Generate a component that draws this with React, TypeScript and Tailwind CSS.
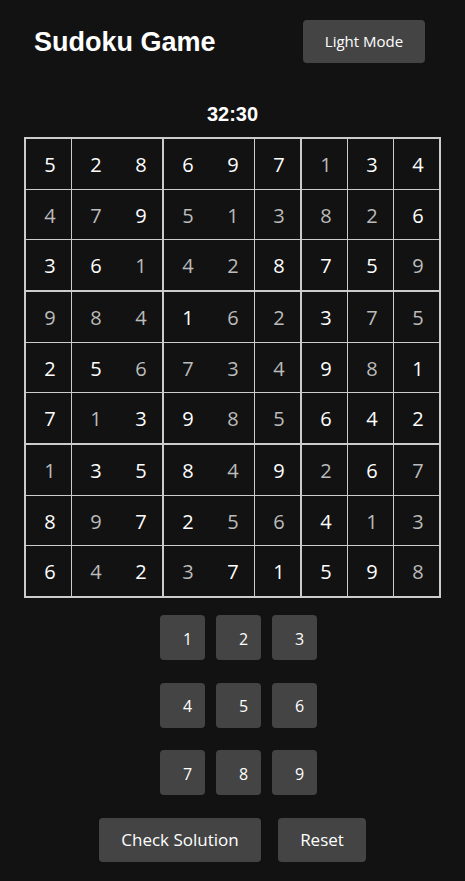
import React from 'react'

const board: string[] = [
  '528697134',
  '479513826',
  '361428759',
  '984162375',
  '256734981',
  '713985642',
  '135849267',
  '897256413',
  '642371598',
]

// 1 = given (white), 0 = entered (grey)
const given: string[] = [
  '111111011',
  '001000001',
  '110001110',
  '000100100',
  '110000101',
  '101100111',
  '011101010',
  '101100100',
  '101011110',
]

const colClass = [
  'w-[46px] border-r',
  'w-[45px]',
  'w-[47px] border-r-2',
  'w-[45px]',
  'w-[46px] border-r',
  'w-[47px] border-r-2',
  'w-[46px] border-r',
  'w-[46px] border-r',
  'w-[45px]',
]

const rowClass = [
  'h-[51px] border-b',
  'h-[50px] border-b',
  'h-[52px] border-b-2',
  'h-[51px] border-b',
  'h-[50px] border-b',
  'h-[52px] border-b-2',
  'h-[51px] border-b',
  'h-[50px] border-b',
  'h-[50px]',
]

const font = { fontFamily: '"Open Sans", "Noto Sans", sans-serif' }

export default function App() {
  return (
    <div className="min-h-[881px] w-full bg-[#121212] text-white flex flex-col items-center" style={font}>
      {/* Header */}
      <div className="w-full flex items-center justify-between pl-[34px] pr-[40px] pt-[20px]">
        <h1
          className="text-[27px] font-bold leading-none pt-[1px]"
          style={{ fontFamily: '"Liberation Sans", Arial, sans-serif' }}
        >
          Sudoku Game
        </h1>
        <button className="w-[122px] h-[43px] rounded-[4px] bg-[#444444] text-[15px] text-white">
          Light Mode
        </button>
      </div>

      {/* Timer */}
      <div
        className="mt-[39px] text-[20px] leading-[24px] font-bold"
        style={{ fontFamily: '"Liberation Sans", Arial, sans-serif' }}
      >
        32:30
      </div>

      {/* Board */}
      <div className="mt-[11px] border-2 border-[#cccccc] flex flex-col">
        {board.map((row, r) => (
          <div key={r} className="flex">
            {row.split('').map((d, c) => (
              <div
                key={c}
                className={`${colClass[c]} ${rowClass[r]} border-[#cccccc] flex items-center justify-center pl-[3px] pt-[2px] text-[20px] ${
                  given[r][c] === '1' ? 'text-white' : 'text-[#bbbbbb]'
                }`}
              >
                {d}
              </div>
            ))}
          </div>
        ))}
      </div>

      {/* Number pad */}
      <div className="mt-[17px] flex flex-col gap-[22.5px] pl-[12px]">
        {[
          [1, 2, 3],
          [4, 5, 6],
          [7, 8, 9],
        ].map((nums, i) => (
          <div key={i} className="flex gap-[11px]">
            {nums.map((n) => (
              <button
                key={n}
                className="w-[45px] h-[45px] rounded-[4px] bg-[#444444] text-[16px] text-white pl-[10px] pt-[2px]"
              >
                {n}
              </button>
            ))}
          </div>
        ))}
      </div>

      {/* Actions */}
      <div className="mt-[23px] flex gap-[17px]">
        <button className="w-[162px] h-[44px] rounded-[4px] bg-[#444444] text-[17px] text-white">
          Check Solution
        </button>
        <button className="w-[88px] h-[44px] rounded-[4px] bg-[#444444] text-[17px] text-white">
          Reset
        </button>
      </div>
    </div>
  )
}
